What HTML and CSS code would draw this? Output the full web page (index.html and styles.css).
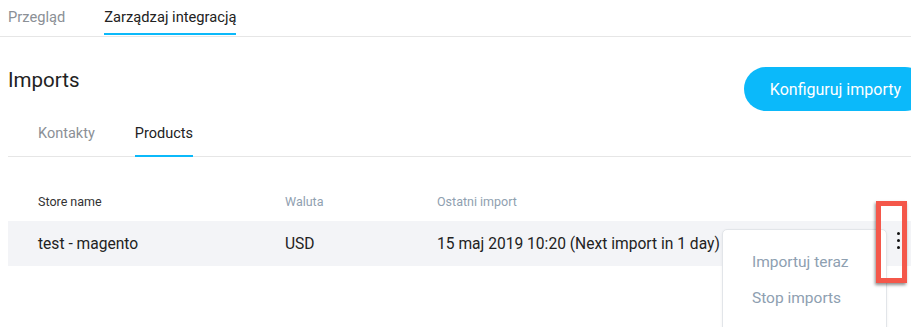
FILE: index.html
```html
<!DOCTYPE html>
<html lang="pl">
<head>
<meta charset="utf-8">
<title>Imports</title>
<link rel="stylesheet" href="styles.css">
</head>
<body>
<div class="page">
  <nav class="top-tabs">
    <a class="tab">Przegląd</a>
    <a class="tab active">Zarządzaj integracją</a>
  </nav>
  <section class="imports">
    <div class="imports-head">
      <h1 class="title">Imports</h1>
      <button class="btn-primary">Konfiguruj importy</button>
    </div>
    <nav class="sub-tabs">
      <a class="sub-tab">Kontakty</a>
      <a class="sub-tab active">Products</a>
    </nav>
    <div class="table">
      <div class="thead">
        <div class="th th-dark">Store name</div>
        <div class="th">Waluta</div>
        <div class="th">Ostatni import</div>
        <div class="th"></div>
      </div>
      <div class="tr">
        <div class="td">test - magento</div>
        <div class="td">USD</div>
        <div class="td">15 maj 2019 10:20 (Next import in 1 day)</div>
        <div class="td td-actions">
          <span class="kebab"><i></i><i></i><i></i></span>
        </div>
      </div>
      <div class="menu">
        <div class="menu-item">Importuj teraz</div>
        <div class="menu-item">Stop imports</div>
      </div>
      <div class="highlight"></div>
    </div>
  </section>
</div>
</body>
</html>
```

FILE: styles.css
```css
html {
  overflow: hidden;
}
html, body {
  margin: 0;
  padding: 0;
  background: #fff;
}
body {
  font-family: Roboto, "Liberation Sans", sans-serif;
  color: #222;
}
.page {
  width: 911px;
  height: 327px;
}
.top-tabs {
  display: flex;
  gap: 39px;
  padding-left: 8px;
  height: 36px;
  border-bottom: 1px solid #e6e6e6;
}
.tab {
  display: flex;
  align-items: center;
  font-size: 14.7px;
  color: #8b9096;
  border-bottom: 2px solid transparent;
  margin-bottom: -1px;
  height: 35px;
  box-sizing: border-box;
}
.tab.active {
  color: #222;
  border-bottom-color: #0bb9fa;
}
.imports {
  padding-left: 8px;
}
.imports-head {
  display: flex;
  justify-content: space-between;
  align-items: flex-start;
  padding-top: 30px;
}
.title {
  margin: 0;
  font-size: 20.5px;
  font-weight: 400;
  line-height: 26px;
  color: #222;
}
.btn-primary {
  height: 44px;
  border: none;
  border-radius: 22px;
  background: #0bb9fa;
  color: #fff;
  font-family: inherit;
  font-size: 16px;
  padding: 0 26px;
  margin-right: -16px;
  white-space: nowrap;
}
.sub-tabs {
  display: flex;
  gap: 40px;
  padding-left: 30px;
  height: 44px;
  margin-top: 1px;
  border-bottom: 1px solid #e6e6e6;
}
.sub-tab {
  display: flex;
  align-items: center;
  font-size: 14.5px;
  color: #8b9096;
  border-bottom: 2px solid transparent;
  margin-bottom: -1px;
  box-sizing: border-box;
  height: 45px;
}
.sub-tab.active {
  color: #222;
  border-bottom-color: #0bb9fa;
}
.table {
  position: relative;
  margin-top: 28px;
}
.thead, .tr {
  display: grid;
  grid-template-columns: 277px 152px 1fr 40px;
  align-items: center;
}
.thead {
  height: 36px;
  padding-bottom: 3px;
  box-sizing: border-box;
}
.th {
  font-size: 12.5px;
  color: #8fa0b0;
}
.th:first-child {
  padding-left: 30px;
}
.th.th-dark {
  color: #333;
}
.tr {
  height: 45px;
  background: #f3f4f7;
}
.td {
  font-size: 15.6px;
  color: #222;
  white-space: nowrap;
}
.td:first-child {
  padding-left: 30px;
}
.td-actions {
  display: flex;
  justify-content: flex-end;
  padding-right: 11px;
  padding-bottom: 6px;
}
.kebab {
  display: flex;
  flex-direction: column;
  gap: 4px;
  width: 3px;
}
.kebab i {
  display: block;
  width: 3px;
  height: 3px;
  border-radius: 50%;
  background: #111;
}
.menu {
  position: absolute;
  left: 714px;
  top: 44px;
  width: 165px;
  height: 120px;
  box-sizing: border-box;
  padding-top: 14px;
  background: #fff;
  border: 1px solid #e2e5e9;
  border-radius: 5px;
  box-shadow: 0 1px 3px rgba(0, 0, 0, 0.06);
}
.menu-item {
  height: 36px;
  line-height: 36px;
  padding-left: 29px;
  font-size: 15.5px;
  color: #8ea0b1;
}
.highlight {
  position: absolute;
  left: 868px;
  top: 16px;
  width: 31px;
  height: 82px;
  box-sizing: border-box;
  border: 5px solid #f4574a;
  box-shadow: -1px 2px 3px rgba(0, 0, 0, 0.45);
}
```
